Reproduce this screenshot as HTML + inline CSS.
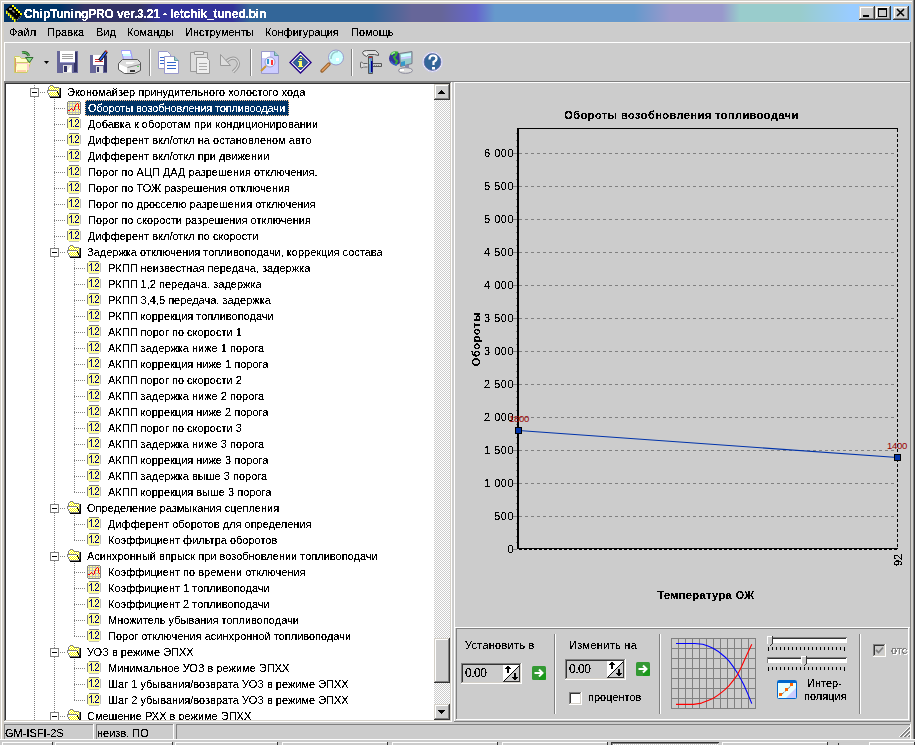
<!DOCTYPE html><html><head><meta charset="utf-8"><style>
html,body{margin:0;padding:0}
body{width:915px;height:745px;position:relative;overflow:hidden;background:#cccccc;font-family:"Liberation Sans",sans-serif;font-size:11px;color:#000}
div,span,svg{position:absolute}
.t{white-space:pre;filter:url(#crisp)}
</style></head><body>
<svg width="0" height="0" style="position:absolute;left:0;top:0"><filter id="crisp" x="-10%" y="-30%" width="120%" height="160%"><feComponentTransfer><feFuncA type="discrete" tableValues="0 0 1 1 1"/></feComponentTransfer></filter></svg>
<div style="left:0px;top:0px;width:915px;height:745px;background:#cccccc;"></div>
<div style="left:0px;top:0px;width:913px;height:1px;background:#d4d0c8;"></div>
<div style="left:0px;top:0px;width:1px;height:739px;background:#d4d0c8;"></div>
<div style="left:1px;top:1px;width:911px;height:1px;background:#ffffff;"></div>
<div style="left:1px;top:1px;width:1px;height:738px;background:#ffffff;"></div>
<div style="left:2px;top:2px;width:910px;height:2px;background:#d4d0c8;"></div>
<div style="left:2px;top:2px;width:2px;height:737px;background:#d4d0c8;"></div>
<div style="left:911px;top:2px;width:1px;height:737px;background:#d4d0c8;"></div>
<div style="left:913px;top:0px;width:1px;height:739px;background:#808080;"></div>
<div style="left:914px;top:0px;width:1px;height:739px;background:#333333;"></div>
<div style="left:4px;top:22px;width:907px;height:1px;background:#d4d0c8;"></div>
<div style="left:4px;top:4px;width:907px;height:18px;background:linear-gradient(to right,#003366 0px,#003366 56px,#333366 81px,#333366 136px,#333399 156px,#333399 229px,#336699 246px,#336699 368px,#666699 408px,#666699 437px,#6666cc 472px,#6699cc 491px,#6699cc 630px,#9999cc 666px,#9999cc 718px,#99cccc 736px,#99cccc 796px,#99ccff 846px,#99ccff 907px);"></div>
<svg style="left:4px;top:4px" width="20" height="18" viewBox="4 4 20 18">
<path d="M11 5L22.5 14.5L16.5 21L5.5 10Z" fill="#000"/>
<path d="M12 5h2v2h-2zM14 7h2v2h-2zM16 9h2v2h-2zM18 11h2v2h-2zM20 13h2v2h-2z" fill="#ffff00"/>
<path d="M6 11h1.5v3h-1.5zM8 13h1.5v3h-1.5zM10 15h1.5v3h-1.5zM12 17h1.5v3h-1.5zM14 19h1.5v3h-1.5z" fill="#ffff00"/>
<path d="M6 10L16 19.5" stroke="#999" stroke-width="0.8" stroke-dasharray="1 1"/>
<path d="M17 20L21.5 15.5" stroke="#999" stroke-width="1.5" stroke-dasharray="1 1"/>
<path d="M9 8h3v2h-3z" fill="#999"/><path d="M12.5 10.5L14.5 12.5" stroke="#999" stroke-width="1.2"/><path d="M16 14h1v1h-1z" fill="#999"/>
</svg>
<span class="t" style="left:24px;top:5px;line-height:18px;color:#fff;font-weight:bold;font-size:12px;letter-spacing:-0.15px">ChipTuningPRO ver.3.21 - letchik_tuned.bin</span>
<div style="left:859px;top:6px;width:16px;height:14px;background:#cccccc;"></div>
<div style="left:859px;top:6px;width:16px;height:1px;background:#d4d0c8;"></div>
<div style="left:859px;top:6px;width:1px;height:14px;background:#d4d0c8;"></div>
<div style="left:859px;top:19px;width:16px;height:1px;background:#333333;"></div>
<div style="left:874px;top:6px;width:1px;height:14px;background:#333333;"></div>
<div style="left:860px;top:7px;width:14px;height:1px;background:#ffffff;"></div>
<div style="left:860px;top:7px;width:1px;height:12px;background:#ffffff;"></div>
<div style="left:860px;top:18px;width:14px;height:1px;background:#808080;"></div>
<div style="left:873px;top:7px;width:1px;height:12px;background:#808080;"></div>
<div style="left:875px;top:6px;width:16px;height:14px;background:#cccccc;"></div>
<div style="left:875px;top:6px;width:16px;height:1px;background:#d4d0c8;"></div>
<div style="left:875px;top:6px;width:1px;height:14px;background:#d4d0c8;"></div>
<div style="left:875px;top:19px;width:16px;height:1px;background:#333333;"></div>
<div style="left:890px;top:6px;width:1px;height:14px;background:#333333;"></div>
<div style="left:876px;top:7px;width:14px;height:1px;background:#ffffff;"></div>
<div style="left:876px;top:7px;width:1px;height:12px;background:#ffffff;"></div>
<div style="left:876px;top:18px;width:14px;height:1px;background:#808080;"></div>
<div style="left:889px;top:7px;width:1px;height:12px;background:#808080;"></div>
<div style="left:893px;top:6px;width:16px;height:14px;background:#cccccc;"></div>
<div style="left:893px;top:6px;width:16px;height:1px;background:#d4d0c8;"></div>
<div style="left:893px;top:6px;width:1px;height:14px;background:#d4d0c8;"></div>
<div style="left:893px;top:19px;width:16px;height:1px;background:#333333;"></div>
<div style="left:908px;top:6px;width:1px;height:14px;background:#333333;"></div>
<div style="left:894px;top:7px;width:14px;height:1px;background:#ffffff;"></div>
<div style="left:894px;top:7px;width:1px;height:12px;background:#ffffff;"></div>
<div style="left:894px;top:18px;width:14px;height:1px;background:#808080;"></div>
<div style="left:907px;top:7px;width:1px;height:12px;background:#808080;"></div>
<div style="left:863px;top:15px;width:6px;height:2px;background:#000;"></div>
<div style="left:878px;top:8px;width:9px;height:9px;background:#000;"></div>
<div style="left:879px;top:10px;width:7px;height:6px;background:#cccccc;"></div>
<svg style="left:896px;top:8px" width="10" height="10" viewBox="0 0 10 10"><path d="M1 1L8 8M8 1L1 8" stroke="#000" stroke-width="1.6"/></svg>
<span class="t" style="left:9px;top:24px;line-height:16px;">Файл</span>
<span class="t" style="left:47px;top:24px;line-height:16px;">Правка</span>
<span class="t" style="left:96px;top:24px;line-height:16px;">Вид</span>
<span class="t" style="left:127px;top:24px;line-height:16px;">Команды</span>
<span class="t" style="left:185px;top:24px;line-height:16px;">Инструменты</span>
<span class="t" style="left:265px;top:24px;line-height:16px;">Конфигурация</span>
<span class="t" style="left:351px;top:24px;line-height:16px;">Помощь</span>
<div style="left:4px;top:42px;width:907px;height:1px;background:#ffffff;"></div>
<div style="left:4px;top:42px;width:1px;height:39px;background:#ffffff;"></div>
<div style="left:910px;top:42px;width:1px;height:40px;background:#808080;"></div>
<div style="left:4px;top:81px;width:907px;height:1px;background:#808080;"></div>
<div style="left:149px;top:49px;width:1px;height:27px;background:#808080;"></div>
<div style="left:150px;top:49px;width:1px;height:27px;background:#ffffff;"></div>
<div style="left:250px;top:49px;width:1px;height:27px;background:#808080;"></div>
<div style="left:251px;top:49px;width:1px;height:27px;background:#ffffff;"></div>
<div style="left:351px;top:49px;width:1px;height:27px;background:#808080;"></div>
<div style="left:352px;top:49px;width:1px;height:27px;background:#ffffff;"></div>
<svg style="left:0;top:42px" width="460" height="40" viewBox="0 42 460 40">
<!-- open -->
<path d="M14.5 72.5V56.5H19.5L21.5 58.5H27.5V62.5" fill="#ffffcc" stroke="#cccc66"/>
<path d="M16.5 62.5H30.5L27 72.5H14.5Z" fill="#ffffcc" stroke="#cccc66"/>
<path d="M15 58h1v14h-1z" fill="#dd9966"/>
<path d="M16 63h12v1h-12z" fill="#ffcccc"/>
<path d="M17 70h9v2h-9z" fill="#ffccaa"/>
<path d="M27 64h2v6h-2z" fill="#ffcccc"/>
<path d="M22 52.5Q27 51.5 29 56" stroke="#336633" stroke-width="2.6" fill="none"/>
<path d="M22 52.5Q27 51.5 29 56" stroke="#66cc66" stroke-width="1" fill="none"/>
<path d="M25.5 57.5H33L29.5 62.5Z" fill="#88dd88" stroke="#336633" stroke-linejoin="round"/>
<path d="M44 61h5l-2.5 3z" fill="#000"/>
<!-- save -->
<path d="M57 51h21v22h-21z" fill="#666699"/>
<path d="M74 52h3v20h-3z" fill="#333366"/>
<path d="M60 51h15v12h-15z" fill="#ffffff"/>
<path d="M62 54h11v1h-11zM62 56h11v1h-11zM62 58h11v1h-11z" fill="#a0a0a0"/>
<path d="M60 62h15v1h-15z" fill="#9999cc"/>
<path d="M63 65h9v8h-9z" fill="#e0e0e0"/>
<path d="M64 66h3v6h-3z" fill="#333366"/>
<path d="M67 71L71 66V72H67Z" fill="#ffffff"/>
<!-- save as -->
<path d="M90 55h17v18h-17z" fill="#666699"/>
<path d="M104 56h3v16h-3z" fill="#333366"/>
<path d="M93 55h11v10h-11z" fill="#ffffff"/>
<path d="M95 59h8v1h-8zM95 61h8v1h-8z" fill="#cc3333"/>
<path d="M96 66h7v7h-7z" fill="#e0e0e0"/><path d="M97 67h2v5h-2z" fill="#333366"/>
<path d="M99.5 60.5L106.5 51.5" stroke="#000" stroke-width="3.2"/>
<path d="M100 60L106 52" stroke="#3366ff" stroke-width="1.5"/>
<path d="M105.5 50.5l1.5 1.5" stroke="#cc3333" stroke-width="1.5"/>
<!-- print -->
<path d="M121.5 50.5H130.5L132.5 59.5H123.5Z" fill="#ccccff" stroke="#9999ff"/>
<path d="M122 51h8v3h-8z" fill="#ffffff"/><path d="M123 54h8v2h-8z" fill="#ccffff"/>
<path d="M118.5 63.5L122.5 59.5H137.5L140.5 62.5V70.5L134.5 73.5H124.5L118.5 69.5Z" fill="#dddddd" stroke="#555555"/>
<path d="M119 64L127 67.5V73H124.5L119 69Z" fill="#ffffff"/>
<path d="M126 62h9l-3 2h-6z" fill="#ffffff"/>
<path d="M127.5 67.5L140 64.5" stroke="#888888"/>
<path d="M130 70h5v2h-5z" fill="#333333"/>
<path d="M137 66h2v1h-2z" fill="#66cc66"/>
<!-- copy -->
<path d="M158.5 51.5H167.5L170.5 54.5V68.5H158.5Z" fill="#ffffff" stroke="#9999cc"/>
<path d="M160 57h6v1h-6zM160 60h6v1h-6zM160 63h6v1h-6z" fill="#3366cc"/>
<path d="M164.5 56.5H174.5L178.5 60.5V73.5H164.5Z" fill="#ffffff" stroke="#9999cc"/>
<path d="M174.5 56.5V60.5H178.5" fill="#99cccc" stroke="#669999"/>
<path d="M167 62h9v1h-9zM167 65h9v1h-9zM167 68h9v1h-9z" fill="#3366cc"/>
<!-- paste (disabled) -->
<path d="M190.5 52.5H207.5V71.5H190.5Z" fill="#dddddd" stroke="#999999" rx="2"/>
<path d="M194.5 51.5H203.5V54.5H194.5Z" fill="#e8e8e8" stroke="#999999"/>
<path d="M196.5 57.5H206.5L209.5 60.5V73.5H196.5Z" fill="#eeeeee" stroke="#999999"/>
<path d="M199 63h8v1h-8zM199 66h8v1h-8zM199 69h8v1h-8z" fill="#aaaaaa"/>
<!-- undo (disabled) -->
<path d="M224 64Q231 56 236 59Q241 63 236 69L233 72" stroke="#999999" stroke-width="3.2" fill="none"/>
<path d="M224 64Q231 56 236 59Q241 63 236 69L233 72" stroke="#dddddd" stroke-width="1.2" fill="none"/>
<path d="M220.5 54.5V65.5H230.5Z" fill="#dddddd" stroke="#999999"/>
<!-- doc magnifier -->
<path d="M261.5 51.5H274.5L278.5 55.5V73.5H261.5Z" fill="#ccccff" stroke="#9999cc"/>
<path d="M262 52h8v6h-8z" fill="#ffffff"/>
<path d="M274.5 51.5V55.5H278.5" fill="#99cccc" stroke="#669999"/>
<circle cx="270" cy="62" r="5" fill="#eeeeff" stroke="#9999cc"/>
<path d="M267 59h2v5h-2z" fill="#3399cc"/><path d="M271 60h2v5h-2z" fill="#ff3333"/>
<path d="M266 66L261 71" stroke="#cc9933" stroke-width="2"/>
<!-- info -->
<path d="M300.5 52L311 62.5L300.5 73L290 62.5Z" fill="#ffffff" stroke="#220088" stroke-width="1.4"/>
<path d="M300.5 55L308 62.5L300.5 70L293 62.5Z" fill="#336699" stroke="#000066" stroke-width="0.8"/>
<path d="M299 59h3v1h-3z M299 61h3v6h-3z M298 61h1v1h-1z M298 66h5v1h-5z" fill="#ffff66"/>
<path d="M300 57h2v1h-2z" fill="#ffff66"/>
<!-- magnifier -->
<path d="M329 64L322 71" stroke="#996633" stroke-width="3.5" stroke-linecap="round"/>
<path d="M329 64L322 71" stroke="#e8a060" stroke-width="1.5"/>
<circle cx="336" cy="57.5" r="7.5" fill="#ccffff" stroke="#9999cc"/>
<path d="M331 59Q331 52 338 51.5" stroke="#99cccc" stroke-width="1.5" fill="none"/>
<path d="M336 58h3v3h-3z" fill="#ffffff"/>
<!-- tools -->
<path d="M366.5 50.5H375.5L378.5 53.5V55.5L374.5 54.5H368.5L366.5 56.5Q362.5 55 362.5 52.5Q363.5 50.5 366.5 50.5Z" fill="#dddddd" stroke="#555555"/>
<path d="M364.5 52.5Q365.5 55 367 54" stroke="#ffffff" fill="none"/>
<path d="M367.5 63.5H363.5Q360.5 61 360.5 63V67Q360.5 69 363.5 67H367.5" fill="#dddddd" stroke="#666666"/>
<path d="M363 64.5h2v2h-2z" fill="#cccccc"/>
<path d="M372.5 63.5H381.5V66.5H372.5Z" fill="#cccccc" stroke="#555555"/>
<path d="M374 65h1v1h-1zM376 65h1v1h-1zM378 65h1v1h-1z" fill="#888"/>
<path d="M368.5 56.5H372.5V73.5H368.5Z" fill="#6699cc" stroke="#555555"/>
<path d="M369 57h3v1h-3z" fill="#cc3333"/>
<path d="M371 61h1.5v11h-1.5z" fill="#000099"/>
<path d="M369 59h1v5h-1z" fill="#99cccc"/>
<!-- network -->
<circle cx="395.5" cy="58.5" r="6.5" fill="#333399"/>
<path d="M391 55Q393 51.5 397 52.5Q396 56 394 57Q395 60 397 61Q396 64 395 65" stroke="#33aa33" stroke-width="2.2" fill="none"/>
<path d="M391.5 54.5Q393 52.5 395 52.5" stroke="#99ee99" stroke-width="1.5" fill="none"/>
<path d="M391 61Q393 65 397 65" stroke="#3366cc" stroke-width="1.5" fill="none"/>
<path d="M399.5 53.5L412 51.5V63.5L400.5 66.5Z" fill="#99cccc" stroke="#777788"/>
<path d="M401 54.5L411 53V56L401 57.5Z" fill="#ccffff"/>
<path d="M401 57.5L411 56V58L401 59.5Z" fill="#ccccff"/>
<path d="M401 62L405 61V65.5L401 66Z" fill="#3399cc"/>
<path d="M405 65h4v3h-4z" fill="#8888aa"/>
<ellipse cx="405.5" cy="70.5" rx="7" ry="2.8" fill="#dddddd" stroke="#888899"/>
<path d="M400 69h4v2h-4z" fill="#ffffff"/>
<!-- help -->
<circle cx="432.5" cy="62" r="10" fill="#ffffff" stroke="#ccccee"/>
<circle cx="432.5" cy="62" r="8.5" fill="#336699" stroke="#6666aa" stroke-width="0.8"/>
<path d="M429.5 59.5Q429.5 55.5 433 55.5Q436.5 55.5 436.5 58.5Q436.5 60.5 433.5 62V65" stroke="#ffffff" stroke-width="2.2" fill="none"/>
<path d="M432 67h3v2.5h-3z" fill="#ffffff"/>
</svg>
<div style="left:4px;top:82px;width:448px;height:640px;background:#ffffff;"></div>
<div style="left:4px;top:82px;width:448px;height:1px;background:#808080;"></div>
<div style="left:4px;top:82px;width:1px;height:640px;background:#808080;"></div>
<div style="left:5px;top:83px;width:446px;height:1px;background:#333333;"></div>
<div style="left:5px;top:83px;width:1px;height:638px;background:#333333;"></div>
<div style="left:4px;top:721px;width:448px;height:1px;background:#ffffff;"></div>
<div style="left:451px;top:82px;width:1px;height:640px;background:#ffffff;"></div>
<div style="left:5px;top:720px;width:446px;height:1px;background:#d4d0c8;"></div>
<div style="left:450px;top:83px;width:1px;height:638px;background:#d4d0c8;"></div>
<div style="left:6px;top:84px;width:428px;height:636px;overflow:hidden;background:#fff">
<svg style="left:0;top:0" width="428" height="636" viewBox="6 84 428 636">
<defs>
<pattern id="dotv" x="0" y="1" width="1" height="2" patternUnits="userSpaceOnUse"><rect width="1" height="1" fill="#808080"/></pattern>
<pattern id="doth" x="0" y="0" width="2" height="1" patternUnits="userSpaceOnUse"><rect width="1" height="1" fill="#808080"/></pattern>
<pattern id="chk" x="0" y="0" width="2" height="2" patternUnits="userSpaceOnUse"><rect width="2" height="2" fill="#ffffff"/><rect width="1" height="1" fill="#ffff00"/><rect x="1" y="1" width="1" height="1" fill="#ffff00"/></pattern>
<symbol id="num" width="14" height="13"><path fill="#808080" d="M2 0h10v1h-10zM0 2h1v1h-1zM0 3h1v1h-1zM0 4h1v1h-1zM0 5h1v1h-1zM0 6h1v1h-1zM0 7h1v1h-1zM0 8h1v1h-1zM0 9h1v1h-1zM0 10h1v1h-1z"/><path fill="#ffff99" d="M1 1h12v1h-12zM1 2h3v1h-3zM5 2h4v1h-4zM11 2h2v1h-2zM1 3h2v1h-2zM5 3h3v1h-3zM9 3h2v1h-2zM12 3h1v1h-1zM1 4h1v1h-1zM3 4h1v1h-1zM5 4h3v1h-3zM9 4h2v1h-2zM12 4h1v1h-1zM1 5h3v1h-3zM5 5h6v1h-6zM12 5h1v1h-1zM1 6h3v1h-3zM5 6h5v1h-5zM11 6h2v1h-2zM1 7h3v1h-3zM5 7h4v1h-4zM10 7h3v1h-3zM1 8h3v1h-3zM5 8h3v1h-3zM9 8h4v1h-4zM1 9h3v1h-3zM5 9h1v1h-1zM7 9h1v1h-1zM12 9h1v1h-1zM1 10h12v1h-12zM1 11h12v1h-12z"/><path fill="#000080" d="M4 2h1v1h-1zM9 2h2v1h-2zM3 3h2v1h-2zM8 3h1v1h-1zM11 3h1v1h-1zM2 4h1v1h-1zM4 4h1v1h-1zM8 4h1v1h-1zM11 4h1v1h-1zM4 5h1v1h-1zM11 5h1v1h-1zM4 6h1v1h-1zM10 6h1v1h-1zM4 7h1v1h-1zM9 7h1v1h-1zM4 8h1v1h-1zM8 8h1v1h-1zM4 9h1v1h-1zM6 9h1v1h-1zM8 9h4v1h-4z"/><path fill="#c0c0c0" d="M13 2h1v1h-1zM13 3h1v1h-1zM13 4h1v1h-1zM13 5h1v1h-1zM13 6h1v1h-1zM13 7h1v1h-1zM13 8h1v1h-1zM13 9h1v1h-1zM13 10h1v1h-1zM2 12h10v1h-10z"/></symbol><symbol id="chart" width="14" height="14"><path fill="#808080" d="M1 0h12v1h-12zM0 1h1v1h-1zM13 1h1v1h-1zM0 2h1v1h-1zM13 2h1v1h-1zM0 3h1v1h-1zM13 3h1v1h-1zM0 4h1v1h-1zM13 4h1v1h-1zM0 5h1v1h-1zM13 5h1v1h-1zM0 6h1v1h-1zM13 6h1v1h-1zM0 7h1v1h-1zM13 7h1v1h-1zM0 8h1v1h-1zM13 8h1v1h-1zM0 9h1v1h-1zM13 9h1v1h-1zM0 10h1v1h-1zM13 10h1v1h-1zM0 11h1v1h-1zM13 11h1v1h-1zM0 12h1v1h-1zM13 12h1v1h-1zM1 13h12v1h-12z"/><path fill="#ffff99" d="M1 1h1v1h-1zM3 1h2v1h-2zM6 1h2v1h-2zM9 1h2v1h-2zM12 1h1v1h-1zM1 3h1v1h-1zM3 3h2v1h-2zM6 3h2v1h-2zM10 3h1v1h-1zM12 3h1v1h-1zM1 4h1v1h-1zM3 4h2v1h-2zM6 4h2v1h-2zM9 4h2v1h-2zM12 4h1v1h-1zM1 6h1v1h-1zM3 6h2v1h-2zM6 6h1v1h-1zM9 6h2v1h-2zM12 6h1v1h-1zM1 7h1v1h-1zM3 7h1v1h-1zM6 7h1v1h-1zM9 7h2v1h-2zM12 7h1v1h-1zM3 9h2v1h-2zM7 9h1v1h-1zM9 9h2v1h-2zM12 9h1v1h-1zM1 10h1v1h-1zM3 10h2v1h-2zM6 10h2v1h-2zM9 10h2v1h-2zM12 10h1v1h-1zM1 12h1v1h-1zM3 12h2v1h-2zM6 12h2v1h-2zM9 12h2v1h-2zM12 12h1v1h-1z"/><path fill="#c0c0c0" d="M2 1h1v1h-1zM5 1h1v1h-1zM8 1h1v1h-1zM11 1h1v1h-1zM1 2h9v1h-9zM11 2h2v1h-2zM2 3h1v1h-1zM5 3h1v1h-1zM8 3h1v1h-1zM2 4h1v1h-1zM5 4h1v1h-1zM1 5h7v1h-7zM9 5h2v1h-2zM12 5h1v1h-1zM2 6h1v1h-1zM5 6h1v1h-1zM8 6h1v1h-1zM2 7h1v1h-1zM5 7h1v1h-1zM8 7h1v1h-1zM1 8h2v1h-2zM4 8h1v1h-1zM6 8h1v1h-1zM8 8h4v1h-4zM5 9h1v1h-1zM8 9h1v1h-1zM11 9h1v1h-1zM2 10h1v1h-1zM5 10h1v1h-1zM8 10h1v1h-1zM11 10h1v1h-1zM1 11h12v1h-12zM2 12h1v1h-1zM5 12h1v1h-1zM8 12h1v1h-1zM11 12h1v1h-1z"/><path fill="#ff0000" d="M10 2h1v1h-1zM9 3h1v1h-1zM11 3h1v1h-1zM8 4h1v1h-1zM11 4h1v1h-1zM8 5h1v1h-1zM11 5h1v1h-1zM7 6h1v1h-1zM11 6h1v1h-1zM4 7h1v1h-1zM7 7h1v1h-1zM11 7h1v1h-1zM3 8h1v1h-1zM5 8h1v1h-1zM7 8h1v1h-1zM12 8h1v1h-1zM1 9h2v1h-2zM6 9h1v1h-1z"/></symbol><symbol id="fold" width="14" height="13"><path fill="#808080" d="M3 0h3v1h-3zM2 1h1v1h-1zM6 1h1v1h-1zM1 2h1v1h-1zM7 2h5v1h-5zM1 3h1v1h-1zM12 3h1v1h-1zM1 4h1v1h-1zM12 4h1v1h-1zM0 5h10v1h-10zM12 5h1v1h-1zM0 6h1v1h-1zM12 6h1v1h-1zM0 7h1v1h-1zM12 7h1v1h-1zM1 8h1v1h-1zM12 8h1v1h-1zM1 9h1v1h-1zM12 9h1v1h-1zM2 10h1v1h-1zM2 11h10v1h-10z"/><path fill="#ffff00" d="M3 1h1v1h-1zM5 1h1v1h-1zM4 2h1v1h-1zM6 2h1v1h-1zM3 3h1v1h-1zM5 3h1v1h-1zM7 3h1v1h-1zM9 3h1v1h-1zM11 3h1v1h-1zM2 4h1v1h-1zM4 4h1v1h-1zM6 4h1v1h-1zM8 4h1v1h-1zM10 4h1v1h-1zM11 5h1v1h-1zM3 7h1v1h-1zM5 7h1v1h-1zM7 7h1v1h-1zM9 7h1v1h-1zM11 7h1v1h-1zM2 8h1v1h-1zM4 8h1v1h-1zM6 8h1v1h-1zM8 8h1v1h-1zM10 8h1v1h-1zM3 9h1v1h-1zM5 9h1v1h-1zM7 9h1v1h-1zM9 9h1v1h-1zM4 10h1v1h-1zM6 10h1v1h-1zM8 10h1v1h-1zM10 10h1v1h-1z"/><path fill="#ffffff" d="M4 1h1v1h-1zM2 2h2v1h-2zM5 2h1v1h-1zM2 3h1v1h-1zM4 3h1v1h-1zM6 3h1v1h-1zM8 3h1v1h-1zM10 3h1v1h-1zM3 4h1v1h-1zM5 4h1v1h-1zM7 4h1v1h-1zM9 4h1v1h-1zM11 4h1v1h-1zM10 5h1v1h-1zM1 6h9v1h-9zM11 6h1v1h-1zM1 7h2v1h-2zM4 7h1v1h-1zM6 7h1v1h-1zM8 7h1v1h-1zM3 8h1v1h-1zM5 8h1v1h-1zM7 8h1v1h-1zM9 8h1v1h-1zM2 9h1v1h-1zM4 9h1v1h-1zM6 9h1v1h-1zM8 9h1v1h-1zM10 9h1v1h-1zM3 10h1v1h-1zM5 10h1v1h-1zM7 10h1v1h-1zM9 10h1v1h-1zM11 10h1v1h-1z"/><path fill="#000000" d="M13 3h1v1h-1zM13 4h1v1h-1zM13 5h1v1h-1zM10 6h1v1h-1zM13 6h1v1h-1zM10 7h1v1h-1zM13 7h1v1h-1zM11 8h1v1h-1zM13 8h1v1h-1zM11 9h1v1h-1zM13 9h1v1h-1zM12 10h2v1h-2zM12 11h2v1h-2zM3 12h11v1h-11z"/></symbol></defs>
<rect x="34" y="84" width="1" height="636" fill="url(#dotv)"/>
<rect x="54" y="97" width="1" height="623" fill="url(#dotv)"/>
<rect x="74" y="257" width="1" height="236" fill="url(#dotv)"/>
<rect x="74" y="513" width="1" height="28" fill="url(#dotv)"/>
<rect x="74" y="561" width="1" height="76" fill="url(#dotv)"/>
<rect x="74" y="657" width="1" height="44" fill="url(#dotv)"/>
<rect x="40" y="92" width="5" height="1" fill="url(#doth)"/>
<rect x="30.5" y="88.5" width="8" height="8" fill="#fff" stroke="#808080"/>
<rect x="32" y="92" width="5" height="1" fill="#000"/>
<use href="#fold" x="47" y="85"/>
<rect x="54" y="108" width="11" height="1" fill="url(#doth)"/>
<use href="#chart" x="67" y="101"/>
<rect x="54" y="124" width="11" height="1" fill="url(#doth)"/>
<use href="#num" x="67" y="117"/>
<rect x="54" y="140" width="11" height="1" fill="url(#doth)"/>
<use href="#num" x="67" y="133"/>
<rect x="54" y="156" width="11" height="1" fill="url(#doth)"/>
<use href="#num" x="67" y="149"/>
<rect x="54" y="172" width="11" height="1" fill="url(#doth)"/>
<use href="#num" x="67" y="165"/>
<rect x="54" y="188" width="11" height="1" fill="url(#doth)"/>
<use href="#num" x="67" y="181"/>
<rect x="54" y="204" width="11" height="1" fill="url(#doth)"/>
<use href="#num" x="67" y="197"/>
<rect x="54" y="220" width="11" height="1" fill="url(#doth)"/>
<use href="#num" x="67" y="213"/>
<rect x="54" y="236" width="11" height="1" fill="url(#doth)"/>
<use href="#num" x="67" y="229"/>
<rect x="60" y="252" width="5" height="1" fill="url(#doth)"/>
<rect x="50.5" y="248.5" width="8" height="8" fill="#fff" stroke="#808080"/>
<rect x="52" y="252" width="5" height="1" fill="#000"/>
<use href="#fold" x="67" y="245"/>
<rect x="74" y="268" width="11" height="1" fill="url(#doth)"/>
<use href="#num" x="87" y="261"/>
<rect x="74" y="284" width="11" height="1" fill="url(#doth)"/>
<use href="#num" x="87" y="277"/>
<rect x="74" y="300" width="11" height="1" fill="url(#doth)"/>
<use href="#num" x="87" y="293"/>
<rect x="74" y="316" width="11" height="1" fill="url(#doth)"/>
<use href="#num" x="87" y="309"/>
<rect x="74" y="332" width="11" height="1" fill="url(#doth)"/>
<use href="#num" x="87" y="325"/>
<rect x="74" y="348" width="11" height="1" fill="url(#doth)"/>
<use href="#num" x="87" y="341"/>
<rect x="74" y="364" width="11" height="1" fill="url(#doth)"/>
<use href="#num" x="87" y="357"/>
<rect x="74" y="380" width="11" height="1" fill="url(#doth)"/>
<use href="#num" x="87" y="373"/>
<rect x="74" y="396" width="11" height="1" fill="url(#doth)"/>
<use href="#num" x="87" y="389"/>
<rect x="74" y="412" width="11" height="1" fill="url(#doth)"/>
<use href="#num" x="87" y="405"/>
<rect x="74" y="428" width="11" height="1" fill="url(#doth)"/>
<use href="#num" x="87" y="421"/>
<rect x="74" y="444" width="11" height="1" fill="url(#doth)"/>
<use href="#num" x="87" y="437"/>
<rect x="74" y="460" width="11" height="1" fill="url(#doth)"/>
<use href="#num" x="87" y="453"/>
<rect x="74" y="476" width="11" height="1" fill="url(#doth)"/>
<use href="#num" x="87" y="469"/>
<rect x="74" y="492" width="11" height="1" fill="url(#doth)"/>
<use href="#num" x="87" y="485"/>
<rect x="60" y="508" width="5" height="1" fill="url(#doth)"/>
<rect x="50.5" y="504.5" width="8" height="8" fill="#fff" stroke="#808080"/>
<rect x="52" y="508" width="5" height="1" fill="#000"/>
<use href="#fold" x="67" y="501"/>
<rect x="74" y="524" width="11" height="1" fill="url(#doth)"/>
<use href="#num" x="87" y="517"/>
<rect x="74" y="540" width="11" height="1" fill="url(#doth)"/>
<use href="#num" x="87" y="533"/>
<rect x="60" y="556" width="5" height="1" fill="url(#doth)"/>
<rect x="50.5" y="552.5" width="8" height="8" fill="#fff" stroke="#808080"/>
<rect x="52" y="556" width="5" height="1" fill="#000"/>
<use href="#fold" x="67" y="549"/>
<rect x="74" y="572" width="11" height="1" fill="url(#doth)"/>
<use href="#chart" x="87" y="565"/>
<rect x="74" y="588" width="11" height="1" fill="url(#doth)"/>
<use href="#num" x="87" y="581"/>
<rect x="74" y="604" width="11" height="1" fill="url(#doth)"/>
<use href="#num" x="87" y="597"/>
<rect x="74" y="620" width="11" height="1" fill="url(#doth)"/>
<use href="#num" x="87" y="613"/>
<rect x="74" y="636" width="11" height="1" fill="url(#doth)"/>
<use href="#num" x="87" y="629"/>
<rect x="60" y="652" width="5" height="1" fill="url(#doth)"/>
<rect x="50.5" y="648.5" width="8" height="8" fill="#fff" stroke="#808080"/>
<rect x="52" y="652" width="5" height="1" fill="#000"/>
<use href="#fold" x="67" y="645"/>
<rect x="74" y="668" width="11" height="1" fill="url(#doth)"/>
<use href="#num" x="87" y="661"/>
<rect x="74" y="684" width="11" height="1" fill="url(#doth)"/>
<use href="#num" x="87" y="677"/>
<rect x="74" y="700" width="11" height="1" fill="url(#doth)"/>
<use href="#num" x="87" y="693"/>
<rect x="60" y="716" width="5" height="1" fill="url(#doth)"/>
<rect x="50.5" y="712.5" width="8" height="8" fill="#fff" stroke="#808080"/>
<rect x="52" y="716" width="5" height="1" fill="#000"/>
<use href="#fold" x="67" y="709"/>
</svg>
<span class="t" style="left:61px;top:0px;line-height:16px">Экономайзер принудительного холостого хода</span>
<div style="left:79px;top:16px;width:204px;height:16px;background:#003366"></div>
<div style="left:79px;top:16px;width:202px;height:14px;border:1px dotted #ffcc99"></div>
<span class="t" style="left:82px;top:16px;line-height:16px;color:#fff;letter-spacing:-0.12px">Обороты возобновления топливоодачи</span>
<span class="t" style="left:82px;top:32px;line-height:16px">Добавка к оборотам при кондиционировании</span>
<span class="t" style="left:82px;top:48px;line-height:16px">Дифферент вкл/откл на остановленом авто</span>
<span class="t" style="left:82px;top:64px;line-height:16px">Дифферент вкл/откл при движении</span>
<span class="t" style="left:82px;top:80px;line-height:16px">Порог по АЦП ДАД разрешения отключения.</span>
<span class="t" style="left:82px;top:96px;line-height:16px">Порог по ТОЖ разрешения отключения</span>
<span class="t" style="left:82px;top:112px;line-height:16px">Порог по дросселю разрешения отключения</span>
<span class="t" style="left:82px;top:128px;line-height:16px">Порог по скорости разрешения отключения</span>
<span class="t" style="left:82px;top:144px;line-height:16px">Дифферент вкл/откл по скорости</span>
<span class="t" style="left:81px;top:160px;line-height:16px">Задержка отключения топливоподачи, коррекция состава</span>
<span class="t" style="left:102px;top:176px;line-height:16px">РКПП неизвестная передача, задержка</span>
<span class="t" style="left:102px;top:192px;line-height:16px">РКПП 1,2 передача, задержка</span>
<span class="t" style="left:102px;top:208px;line-height:16px">РКПП 3,4,5 передача, задержка</span>
<span class="t" style="left:102px;top:224px;line-height:16px">РКПП коррекция топливоподачи</span>
<span class="t" style="left:102px;top:240px;line-height:16px">АКПП порог по скорости 1</span>
<span class="t" style="left:102px;top:256px;line-height:16px">АКПП задержка ниже 1 порога</span>
<span class="t" style="left:102px;top:272px;line-height:16px">АКПП коррекция ниже 1 порога</span>
<span class="t" style="left:102px;top:288px;line-height:16px">АКПП порог по скорости 2</span>
<span class="t" style="left:102px;top:304px;line-height:16px">АКПП задержка ниже 2 порога</span>
<span class="t" style="left:102px;top:320px;line-height:16px">АКПП коррекция ниже 2 порога</span>
<span class="t" style="left:102px;top:336px;line-height:16px">АКПП порог по скорости 3</span>
<span class="t" style="left:102px;top:352px;line-height:16px">АКПП задержка ниже 3 порога</span>
<span class="t" style="left:102px;top:368px;line-height:16px">АКПП коррекция ниже 3 порога</span>
<span class="t" style="left:102px;top:384px;line-height:16px">АКПП задержка выше 3 порога</span>
<span class="t" style="left:102px;top:400px;line-height:16px">АКПП коррекция выше 3 порога</span>
<span class="t" style="left:81px;top:416px;line-height:16px">Определение размыкания сцепления</span>
<span class="t" style="left:102px;top:432px;line-height:16px">Дифферент оборотов для определения</span>
<span class="t" style="left:102px;top:448px;line-height:16px">Коэффициент фильтра оборотов</span>
<span class="t" style="left:81px;top:464px;line-height:16px">Асинхронный впрыск при возобновлении топливоподачи</span>
<span class="t" style="left:102px;top:480px;line-height:16px">Коэффициент по времени отключения</span>
<span class="t" style="left:102px;top:496px;line-height:16px">Коэффициент 1 топливоподачи</span>
<span class="t" style="left:102px;top:512px;line-height:16px">Коэффициент 2 топливоподачи</span>
<span class="t" style="left:102px;top:528px;line-height:16px">Множитель убывания топливоподачи</span>
<span class="t" style="left:102px;top:544px;line-height:16px">Порог отключения асинхронной топливоподачи</span>
<span class="t" style="left:81px;top:560px;line-height:16px">УОЗ в режиме ЭПХХ</span>
<span class="t" style="left:102px;top:576px;line-height:16px">Минимальное УОЗ в режиме ЭПХХ</span>
<span class="t" style="left:102px;top:592px;line-height:16px">Шаг 1 убывания/возврата УОЗ в режиме ЭПХХ</span>
<span class="t" style="left:102px;top:608px;line-height:16px">Шаг 2 убывания/возврата УОЗ в режиме ЭПХХ</span>
<span class="t" style="left:81px;top:624px;line-height:16px">Смешение РХХ в режиме ЭПХХ</span>
</div>
<div style="left:434px;top:84px;width:16px;height:636px;background:repeating-conic-gradient(#ffffff 0 25%,#cccccc 0 50%) 0 0/2px 2px;"></div>
<div style="left:434px;top:84px;width:16px;height:16px;background:#cccccc;"></div>
<div style="left:434px;top:84px;width:16px;height:1px;background:#d4d0c8;"></div>
<div style="left:434px;top:84px;width:1px;height:16px;background:#d4d0c8;"></div>
<div style="left:434px;top:99px;width:16px;height:1px;background:#333333;"></div>
<div style="left:449px;top:84px;width:1px;height:16px;background:#333333;"></div>
<div style="left:435px;top:85px;width:14px;height:1px;background:#ffffff;"></div>
<div style="left:435px;top:85px;width:1px;height:14px;background:#ffffff;"></div>
<div style="left:435px;top:98px;width:14px;height:1px;background:#808080;"></div>
<div style="left:448px;top:85px;width:1px;height:14px;background:#808080;"></div>
<svg style="left:434px;top:84px" width="16" height="16"><path d="M7 6h1v1h-1zM6 7h3v1h-3zM5 8h5v1h-5zM4 9h7v1h-7z" fill="#000"/></svg>
<div style="left:434px;top:704px;width:16px;height:16px;background:#cccccc;"></div>
<div style="left:434px;top:704px;width:16px;height:1px;background:#d4d0c8;"></div>
<div style="left:434px;top:704px;width:1px;height:16px;background:#d4d0c8;"></div>
<div style="left:434px;top:719px;width:16px;height:1px;background:#333333;"></div>
<div style="left:449px;top:704px;width:1px;height:16px;background:#333333;"></div>
<div style="left:435px;top:705px;width:14px;height:1px;background:#ffffff;"></div>
<div style="left:435px;top:705px;width:1px;height:14px;background:#ffffff;"></div>
<div style="left:435px;top:718px;width:14px;height:1px;background:#808080;"></div>
<div style="left:448px;top:705px;width:1px;height:14px;background:#808080;"></div>
<svg style="left:434px;top:704px" width="16" height="16"><path d="M4 6h7v1h-7zM5 7h5v1h-5zM6 8h3v1h-3zM7 9h1v1h-1z" fill="#000"/></svg>
<div style="left:434px;top:638px;width:16px;height:45px;background:#cccccc;"></div>
<div style="left:434px;top:638px;width:16px;height:1px;background:#d4d0c8;"></div>
<div style="left:434px;top:638px;width:1px;height:45px;background:#d4d0c8;"></div>
<div style="left:434px;top:682px;width:16px;height:1px;background:#333333;"></div>
<div style="left:449px;top:638px;width:1px;height:45px;background:#333333;"></div>
<div style="left:435px;top:639px;width:14px;height:1px;background:#ffffff;"></div>
<div style="left:435px;top:639px;width:1px;height:43px;background:#ffffff;"></div>
<div style="left:435px;top:681px;width:14px;height:1px;background:#808080;"></div>
<div style="left:448px;top:639px;width:1px;height:43px;background:#808080;"></div>
<div style="left:454px;top:82px;width:1px;height:640px;background:#ffffff;"></div>
<div style="left:454px;top:82px;width:456px;height:1px;background:#ffffff;"></div>
<div style="left:910px;top:82px;width:1px;height:640px;background:#808080;"></div>
<div style="left:454px;top:721px;width:457px;height:1px;background:#808080;"></div>
<svg style="left:455px;top:83px" width="455" height="544" viewBox="455 83 455 544" font-family="Liberation Sans" shape-rendering="crispEdges">
<path d="M519 516.5H897" stroke="#808080" stroke-dasharray="3 3"/>
<path d="M513 516.5H517" stroke="#808080"/>
<text filter="url(#crisp)" x="514" y="520" font-size="11" text-anchor="end" letter-spacing="0.5">500</text>
<path d="M519 483.5H897" stroke="#808080" stroke-dasharray="3 3"/>
<path d="M513 483.5H517" stroke="#808080"/>
<text filter="url(#crisp)" x="514" y="487" font-size="11" text-anchor="end" letter-spacing="0.5">1 000</text>
<path d="M519 450.5H897" stroke="#808080" stroke-dasharray="3 3"/>
<path d="M513 450.5H517" stroke="#808080"/>
<text filter="url(#crisp)" x="514" y="454" font-size="11" text-anchor="end" letter-spacing="0.5">1 500</text>
<path d="M519 417.5H897" stroke="#808080" stroke-dasharray="3 3"/>
<path d="M513 417.5H517" stroke="#808080"/>
<text filter="url(#crisp)" x="514" y="421" font-size="11" text-anchor="end" letter-spacing="0.5">2 000</text>
<path d="M519 384.5H897" stroke="#808080" stroke-dasharray="3 3"/>
<path d="M513 384.5H517" stroke="#808080"/>
<text filter="url(#crisp)" x="514" y="388" font-size="11" text-anchor="end" letter-spacing="0.5">2 500</text>
<path d="M519 351.5H897" stroke="#808080" stroke-dasharray="3 3"/>
<path d="M513 351.5H517" stroke="#808080"/>
<text filter="url(#crisp)" x="514" y="355" font-size="11" text-anchor="end" letter-spacing="0.5">3 000</text>
<path d="M519 318.5H897" stroke="#808080" stroke-dasharray="3 3"/>
<path d="M513 318.5H517" stroke="#808080"/>
<text filter="url(#crisp)" x="514" y="322" font-size="11" text-anchor="end" letter-spacing="0.5">3 500</text>
<path d="M519 285.5H897" stroke="#808080" stroke-dasharray="3 3"/>
<path d="M513 285.5H517" stroke="#808080"/>
<text filter="url(#crisp)" x="514" y="289" font-size="11" text-anchor="end" letter-spacing="0.5">4 000</text>
<path d="M519 252.5H897" stroke="#808080" stroke-dasharray="3 3"/>
<path d="M513 252.5H517" stroke="#808080"/>
<text filter="url(#crisp)" x="514" y="256" font-size="11" text-anchor="end" letter-spacing="0.5">4 500</text>
<path d="M519 219.5H897" stroke="#808080" stroke-dasharray="3 3"/>
<path d="M513 219.5H517" stroke="#808080"/>
<text filter="url(#crisp)" x="514" y="223" font-size="11" text-anchor="end" letter-spacing="0.5">5 000</text>
<path d="M519 186.5H897" stroke="#808080" stroke-dasharray="3 3"/>
<path d="M513 186.5H517" stroke="#808080"/>
<text filter="url(#crisp)" x="514" y="190" font-size="11" text-anchor="end" letter-spacing="0.5">5 500</text>
<path d="M519 153.5H897" stroke="#808080" stroke-dasharray="3 3"/>
<path d="M513 153.5H517" stroke="#808080"/>
<text filter="url(#crisp)" x="514" y="157" font-size="11" text-anchor="end" letter-spacing="0.5">6 000</text>
<path d="M513 549.5H517" stroke="#808080"/>
<text filter="url(#crisp)" x="514" y="553" font-size="11" text-anchor="end" letter-spacing="0.5">0</text>
<path d="M516 542.5H517" stroke="#808080"/>
<path d="M516 536.5H517" stroke="#808080"/>
<path d="M516 529.5H517" stroke="#808080"/>
<path d="M516 523.5H517" stroke="#808080"/>
<path d="M516 509.5H517" stroke="#808080"/>
<path d="M516 503.5H517" stroke="#808080"/>
<path d="M516 496.5H517" stroke="#808080"/>
<path d="M516 490.5H517" stroke="#808080"/>
<path d="M516 476.5H517" stroke="#808080"/>
<path d="M516 470.5H517" stroke="#808080"/>
<path d="M516 463.5H517" stroke="#808080"/>
<path d="M516 457.5H517" stroke="#808080"/>
<path d="M516 443.5H517" stroke="#808080"/>
<path d="M516 437.5H517" stroke="#808080"/>
<path d="M516 430.5H517" stroke="#808080"/>
<path d="M516 424.5H517" stroke="#808080"/>
<path d="M516 410.5H517" stroke="#808080"/>
<path d="M516 404.5H517" stroke="#808080"/>
<path d="M516 397.5H517" stroke="#808080"/>
<path d="M516 391.5H517" stroke="#808080"/>
<path d="M516 377.5H517" stroke="#808080"/>
<path d="M516 371.5H517" stroke="#808080"/>
<path d="M516 364.5H517" stroke="#808080"/>
<path d="M516 358.5H517" stroke="#808080"/>
<path d="M516 344.5H517" stroke="#808080"/>
<path d="M516 338.5H517" stroke="#808080"/>
<path d="M516 331.5H517" stroke="#808080"/>
<path d="M516 325.5H517" stroke="#808080"/>
<path d="M516 311.5H517" stroke="#808080"/>
<path d="M516 305.5H517" stroke="#808080"/>
<path d="M516 298.5H517" stroke="#808080"/>
<path d="M516 292.5H517" stroke="#808080"/>
<path d="M516 278.5H517" stroke="#808080"/>
<path d="M516 272.5H517" stroke="#808080"/>
<path d="M516 265.5H517" stroke="#808080"/>
<path d="M516 259.5H517" stroke="#808080"/>
<path d="M516 245.5H517" stroke="#808080"/>
<path d="M516 239.5H517" stroke="#808080"/>
<path d="M516 232.5H517" stroke="#808080"/>
<path d="M516 226.5H517" stroke="#808080"/>
<path d="M516 212.5H517" stroke="#808080"/>
<path d="M516 206.5H517" stroke="#808080"/>
<path d="M516 199.5H517" stroke="#808080"/>
<path d="M516 193.5H517" stroke="#808080"/>
<path d="M516 179.5H517" stroke="#808080"/>
<path d="M516 173.5H517" stroke="#808080"/>
<path d="M516 166.5H517" stroke="#808080"/>
<path d="M516 160.5H517" stroke="#808080"/>
<path d="M516 146.5H517" stroke="#808080"/>
<path d="M516 140.5H517" stroke="#808080"/>
<path d="M516 133.5H517" stroke="#808080"/>
<path d="M517 128.5H898" stroke="#000"/>
<path d="M517 128h2v421h-2z" fill="#000"/>
<path d="M517 548h381v1h-381z" fill="#000"/>
<path d="M519 549.5H898" stroke="#000" stroke-dasharray="3 2"/>
<path d="M897.5 129V549" stroke="#000" stroke-dasharray="3 2"/>
</svg>
<svg style="left:455px;top:83px" width="455" height="544" viewBox="455 83 455 544" font-family="Liberation Sans">
<path d="M518.5 430.5L897.5 457.5" stroke="#0033aa" stroke-width="1.2"/>
<rect x="515.5" y="427.5" width="6" height="6" fill="#0033aa" stroke="#000"/>
<rect x="894.5" y="454.5" width="6" height="6" fill="#0033aa" stroke="#000"/>
<text x="509" y="422" font-size="9.5" fill="#990000" letter-spacing="-0.3">1800</text>
<text x="887" y="449" font-size="9.5" fill="#990000" letter-spacing="-0.3">1400</text>
<text filter="url(#crisp)" x="681.5" y="119" font-size="11" font-weight="bold" text-anchor="middle" letter-spacing="0.45">Обороты возобновления топливоодачи</text>
<text filter="url(#crisp)" x="706" y="599" font-size="11" font-weight="bold" text-anchor="middle" letter-spacing="0.4">Температура ОЖ</text>
<text filter="url(#crisp)" transform="translate(480 339) rotate(-90)" font-size="11" font-weight="bold" text-anchor="middle" letter-spacing="0.65">Обороты</text>
<text filter="url(#crisp)" transform="translate(902 560) rotate(-90)" font-size="11" text-anchor="middle">92</text>
</svg>
<div style="left:455px;top:627px;width:455px;height:1px;background:#ffffff;"></div>
<div style="left:456px;top:628px;width:452px;height:1px;background:#808080;"></div>
<div style="left:456px;top:628px;width:1px;height:91px;background:#808080;"></div>
<div style="left:908px;top:628px;width:1px;height:92px;background:#ffffff;"></div>
<div style="left:456px;top:719px;width:453px;height:1px;background:#ffffff;"></div>
<div style="left:554px;top:634px;width:1px;height:80px;background:#808080;"></div>
<div style="left:555px;top:634px;width:1px;height:80px;background:#ffffff;"></div>
<div style="left:659px;top:634px;width:1px;height:80px;background:#808080;"></div>
<div style="left:660px;top:634px;width:1px;height:80px;background:#ffffff;"></div>
<div style="left:859px;top:634px;width:1px;height:80px;background:#808080;"></div>
<div style="left:860px;top:634px;width:1px;height:80px;background:#ffffff;"></div>
<span class="t" style="left:465px;top:637px;line-height:16px;letter-spacing:0.25px">Установить в</span>
<div style="left:461px;top:663px;width:61px;height:21px;background:#cccccc;"></div>
<div style="left:461px;top:663px;width:61px;height:1px;background:#808080;"></div>
<div style="left:461px;top:663px;width:1px;height:21px;background:#808080;"></div>
<div style="left:461px;top:683px;width:61px;height:1px;background:#ffffff;"></div>
<div style="left:521px;top:663px;width:1px;height:21px;background:#ffffff;"></div>
<div style="left:462px;top:664px;width:59px;height:1px;background:#333333;"></div>
<div style="left:462px;top:664px;width:1px;height:19px;background:#333333;"></div>
<div style="left:462px;top:682px;width:59px;height:1px;background:#d4d0c8;"></div>
<div style="left:520px;top:664px;width:1px;height:19px;background:#d4d0c8;"></div>
<span class="t" style="left:465px;top:664px;line-height:18px;font-size:12px;letter-spacing:-0.5px">0.00</span>
<svg style="left:503px;top:665px" width="17" height="17" viewBox="0 0 17 17" shape-rendering="crispEdges">
<path d="M0 0H17V17H0Z" fill="#cccccc"/><path d="M0 0H17L0 17Z" fill="#ffffff"/>
<path d="M0.5 16.5L16.5 0.5" stroke="#000" shape-rendering="auto"/>
<path d="M16.5 0V17M0 16.5H17" stroke="#333333"/>
<path d="M4 1h2v1h-2zM3 2h4v1h-4zM2 3h6v1h-6zM4 4h2v4h-2z" fill="#000"/>
<path d="M11 8h2v4h-2zM9 12h6v1h-6zM10 13h4v1h-4zM11 14h2v1h-2z" fill="#000"/>
</svg>
<svg style="left:532px;top:666px" width="14" height="14" viewBox="0 0 14 14">
<rect x="0" y="0" width="14" height="14" rx="1.5" fill="#339933"/>
<rect x="7" y="7" width="7" height="7" fill="#009900" opacity="0.5"/>
<path d="M2.5 7H10M7 3.5L10.5 7L7 10.5" stroke="#ffffff" stroke-width="2" fill="none"/>
</svg>
<span class="t" style="left:569px;top:637px;line-height:16px;letter-spacing:0.3px">Изменить на</span>
<div style="left:565px;top:659px;width:61px;height:21px;background:#cccccc;"></div>
<div style="left:565px;top:659px;width:61px;height:1px;background:#808080;"></div>
<div style="left:565px;top:659px;width:1px;height:21px;background:#808080;"></div>
<div style="left:565px;top:679px;width:61px;height:1px;background:#ffffff;"></div>
<div style="left:625px;top:659px;width:1px;height:21px;background:#ffffff;"></div>
<div style="left:566px;top:660px;width:59px;height:1px;background:#333333;"></div>
<div style="left:566px;top:660px;width:1px;height:19px;background:#333333;"></div>
<div style="left:566px;top:678px;width:59px;height:1px;background:#d4d0c8;"></div>
<div style="left:624px;top:660px;width:1px;height:19px;background:#d4d0c8;"></div>
<span class="t" style="left:569px;top:660px;line-height:18px;font-size:12px;letter-spacing:-0.5px">0.00</span>
<svg style="left:607px;top:661px" width="17" height="17" viewBox="0 0 17 17" shape-rendering="crispEdges">
<path d="M0 0H17V17H0Z" fill="#cccccc"/><path d="M0 0H17L0 17Z" fill="#ffffff"/>
<path d="M0.5 16.5L16.5 0.5" stroke="#000" shape-rendering="auto"/>
<path d="M16.5 0V17M0 16.5H17" stroke="#333333"/>
<path d="M4 1h2v1h-2zM3 2h4v1h-4zM2 3h6v1h-6zM4 4h2v4h-2z" fill="#000"/>
<path d="M11 8h2v4h-2zM9 12h6v1h-6zM10 13h4v1h-4zM11 14h2v1h-2z" fill="#000"/>
</svg>
<svg style="left:636px;top:662px" width="14" height="14" viewBox="0 0 14 14">
<rect x="0" y="0" width="14" height="14" rx="1.5" fill="#339933"/>
<rect x="7" y="7" width="7" height="7" fill="#009900" opacity="0.5"/>
<path d="M2.5 7H10M7 3.5L10.5 7L7 10.5" stroke="#ffffff" stroke-width="2" fill="none"/>
</svg>
<div style="left:569px;top:692px;width:13px;height:13px;background:#ffffff;"></div>
<div style="left:569px;top:692px;width:13px;height:1px;background:#808080;"></div>
<div style="left:569px;top:692px;width:1px;height:13px;background:#808080;"></div>
<div style="left:569px;top:704px;width:13px;height:1px;background:#ffffff;"></div>
<div style="left:581px;top:692px;width:1px;height:13px;background:#ffffff;"></div>
<div style="left:570px;top:693px;width:11px;height:1px;background:#333333;"></div>
<div style="left:570px;top:693px;width:1px;height:11px;background:#333333;"></div>
<div style="left:570px;top:703px;width:11px;height:1px;background:#d4d0c8;"></div>
<div style="left:580px;top:693px;width:1px;height:11px;background:#d4d0c8;"></div>
<span class="t" style="left:588px;top:689px;line-height:16px;">процентов</span>
<svg style="left:671px;top:638px" width="85" height="71" viewBox="671 638 85 71"><path d="M671.5 638V709M678.5 638V709M685.5 638V709M692.5 638V709M699.5 638V709M706.5 638V709M713.5 638V709M720.5 638V709M727.5 638V709M734.5 638V709M741.5 638V709M748.5 638V709M755.5 638V709M671 638.5H756M671 648.5H756M671 658.5H756M671 668.5H756M671 678.5H756M671 688.5H756M671 698.5H756M671 708.5H756" stroke="#808080" shape-rendering="crispEdges"/><path d="M676 643.5L694.7 643.5L702.7 644.3Q708 646 713 648.3Q718 651 722 654.5Q726 657.5 728.9 660.8Q733 666 736.9 672.2Q740.5 678 743.8 684.8L747.8 693.9L751.8 703.6" stroke="#0000ff" stroke-width="1.1" fill="none"/><path d="M676 704.4L693.5 704.4L701.5 703.1Q707 701 712.9 698.5Q718 695.5 722 692.2Q726 689 728.9 685.9Q733 681 736.9 675.7Q740 670 742.6 664.2L747.2 654L751.8 644.3" stroke="#ff0000" stroke-width="1.1" fill="none"/></svg>
<div style="left:767px;top:637px;width:80px;height:6px;background:#ffffff;"></div>
<div style="left:767px;top:637px;width:80px;height:1px;background:#808080;"></div>
<div style="left:767px;top:637px;width:1px;height:6px;background:#808080;"></div>
<div style="left:768px;top:638px;width:78px;height:1px;background:#333333;"></div>
<div style="left:768px;top:642px;width:79px;height:1px;background:#ffffff;"></div>
<svg style="left:767px;top:636px" width="6" height="10" viewBox="0 0 6 10" shape-rendering="crispEdges">
<path d="M0 0H5V7L3 9H2L0 7Z" fill="#cccccc"/>
<path d="M0.5 8V0.5H4.5" stroke="#ffffff" fill="none"/>
<path d="M5.5 0V7.5L3 10" stroke="#333333" fill="none"/>
</svg>
<svg style="left:760px;top:637px" width="100" height="16" viewBox="760 637 100 16" shape-rendering="crispEdges"><path d="M768.5 647V651M772.5 647V650M776.5 647V650M780.5 647V650M784.5 647V650M788.5 647V650M792.5 647V650M796.5 647V650M800.5 647V650M804.5 647V650M808.5 647V650M812.5 647V650M816.5 647V650M820.5 647V650M824.5 647V650M828.5 647V650M832.5 647V650M836.5 647V650M840.5 647V650M844.5 647V651" stroke="#000"/></svg>
<div style="left:767px;top:657px;width:80px;height:6px;background:#ffffff;"></div>
<div style="left:767px;top:657px;width:80px;height:1px;background:#808080;"></div>
<div style="left:767px;top:657px;width:1px;height:6px;background:#808080;"></div>
<div style="left:768px;top:658px;width:78px;height:1px;background:#333333;"></div>
<div style="left:768px;top:662px;width:79px;height:1px;background:#ffffff;"></div>
<svg style="left:801px;top:656px" width="6" height="10" viewBox="0 0 6 10" shape-rendering="crispEdges">
<path d="M0 0H5V7L3 9H2L0 7Z" fill="#cccccc"/>
<path d="M0.5 8V0.5H4.5" stroke="#ffffff" fill="none"/>
<path d="M5.5 0V7.5L3 10" stroke="#333333" fill="none"/>
</svg>
<svg style="left:760px;top:657px" width="100" height="16" viewBox="760 657 100 16" shape-rendering="crispEdges"><path d="M768.5 667V671M772.5 667V670M776.5 667V670M780.5 667V670M784.5 667V670M788.5 667V670M792.5 667V670M796.5 667V670M800.5 667V670M804.5 667V670M808.5 667V670M812.5 667V670M816.5 667V670M820.5 667V670M824.5 667V670M828.5 667V670M832.5 667V670M836.5 667V670M840.5 667V670M844.5 667V671" stroke="#000"/></svg>
<svg style="left:777px;top:680px" width="20" height="19" viewBox="0 0 20 19">
<rect x="0.5" y="0.5" width="19" height="18" rx="1" fill="#e8ffff" stroke="#0066cc"/>
<path d="M1 1H19V3H1Z" fill="#0066cc"/>
<path d="M19 8L19 18H9Z" fill="#ccccff"/>
<path d="M3.5 15.5L15.5 4.5" stroke="#333333" stroke-dasharray="1 1"/>
<rect x="2" y="13" width="3" height="3" fill="#ff6600"/><rect x="8" y="8" width="3" height="3" fill="#ff6600"/><rect x="13" y="3" width="3" height="3" fill="#ff6600"/>
</svg>
<span class="t" style="left:807px;top:675px;line-height:16px;">Интер-</span>
<span class="t" style="left:804px;top:688px;line-height:16px;">поляция</span>
<div style="left:873px;top:644px;width:13px;height:13px;background:#cccccc;"></div>
<div style="left:873px;top:644px;width:13px;height:1px;background:#808080;"></div>
<div style="left:873px;top:644px;width:1px;height:13px;background:#808080;"></div>
<div style="left:873px;top:656px;width:13px;height:1px;background:#ffffff;"></div>
<div style="left:885px;top:644px;width:1px;height:13px;background:#ffffff;"></div>
<div style="left:874px;top:645px;width:11px;height:1px;background:#333333;"></div>
<div style="left:874px;top:645px;width:1px;height:11px;background:#333333;"></div>
<div style="left:874px;top:655px;width:11px;height:1px;background:#d4d0c8;"></div>
<div style="left:884px;top:645px;width:1px;height:11px;background:#d4d0c8;"></div>
<svg style="left:873px;top:644px" width="13" height="13"><path d="M3 6L5.5 8.5L10 3.5" stroke="#808080" stroke-width="1.8" fill="none"/></svg>
<div style="left:891px;top:0;width:17px;height:745px;overflow:hidden">
<span class="t" style="left:1px;top:643px;line-height:16px;color:#ffffff">отс</span>
<span class="t" style="left:0px;top:642px;line-height:16px;color:#808080">отс</span>
</div>
<div style="left:4px;top:724px;width:90px;height:1px;background:#808080;"></div>
<div style="left:4px;top:724px;width:1px;height:15px;background:#808080;"></div>
<div style="left:93px;top:724px;width:1px;height:15px;background:#ffffff;"></div>
<div style="left:96px;top:724px;width:78px;height:1px;background:#808080;"></div>
<div style="left:96px;top:724px;width:1px;height:15px;background:#808080;"></div>
<div style="left:173px;top:724px;width:1px;height:15px;background:#ffffff;"></div>
<div style="left:176px;top:724px;width:735px;height:1px;background:#808080;"></div>
<div style="left:176px;top:724px;width:1px;height:15px;background:#808080;"></div>
<div style="left:910px;top:724px;width:1px;height:15px;background:#ffffff;"></div>
<span class="t" style="left:5px;top:725px;line-height:16px;">GM-ISFI-2S</span>
<span class="t" style="left:97px;top:725px;line-height:16px;">неизв. ПО</span>
<svg style="left:898px;top:725px" width="13" height="13"><path d="M12 1L1 12M12 5L5 12M12 9L9 12" stroke="#ffffff" stroke-width="1"/><path d="M12 2L2 12M12 3L3 12M12 6L6 12M12 7L7 12M12 10L10 12M12 11L11 12" stroke="#808080" stroke-width="1"/></svg>
<div style="left:0px;top:739px;width:915px;height:1px;background:#ffffff;"></div>
<div style="left:2px;top:742px;width:51px;height:1px;background:#ffffff;"></div>
<div style="left:2px;top:742px;width:1px;height:3px;background:#ffffff;"></div>
<div style="left:52px;top:742px;width:1px;height:3px;background:#333333;"></div>
<div style="left:55px;top:742px;width:118px;height:1px;background:#ffffff;"></div>
<div style="left:55px;top:742px;width:1px;height:3px;background:#ffffff;"></div>
<div style="left:172px;top:742px;width:1px;height:3px;background:#333333;"></div>
<div style="left:175px;top:742px;width:103px;height:1px;background:#ffffff;"></div>
<div style="left:175px;top:742px;width:1px;height:3px;background:#ffffff;"></div>
<div style="left:277px;top:742px;width:1px;height:3px;background:#333333;"></div>
<div style="left:282px;top:742px;width:106px;height:1px;background:#ffffff;"></div>
<div style="left:282px;top:742px;width:1px;height:3px;background:#ffffff;"></div>
<div style="left:387px;top:742px;width:1px;height:3px;background:#333333;"></div>
<div style="left:392px;top:742px;width:106px;height:1px;background:#ffffff;"></div>
<div style="left:392px;top:742px;width:1px;height:3px;background:#ffffff;"></div>
<div style="left:497px;top:742px;width:1px;height:3px;background:#333333;"></div>
<div style="left:502px;top:742px;width:106px;height:1px;background:#ffffff;"></div>
<div style="left:502px;top:742px;width:1px;height:3px;background:#ffffff;"></div>
<div style="left:607px;top:742px;width:1px;height:3px;background:#333333;"></div>
<div style="left:722px;top:742px;width:106px;height:1px;background:#ffffff;"></div>
<div style="left:722px;top:742px;width:1px;height:3px;background:#ffffff;"></div>
<div style="left:827px;top:742px;width:1px;height:3px;background:#333333;"></div>
<div style="left:869px;top:742px;width:46px;height:1px;background:#ffffff;"></div>
<div style="left:869px;top:742px;width:1px;height:3px;background:#ffffff;"></div>
<div style="left:914px;top:742px;width:1px;height:3px;background:#333333;"></div>
<div style="left:611px;top:742px;width:108px;height:1px;background:#333333;"></div>
<div style="left:611px;top:742px;width:1px;height:3px;background:#333333;"></div>
<div style="left:612px;top:743px;width:106px;height:1px;background:#808080;"></div>
<div style="left:612px;top:743px;width:1px;height:2px;background:#808080;"></div>
<div style="left:613px;top:744px;width:105px;height:1px;background:repeating-linear-gradient(to right,#ffffff 0 1px,#cccccc 1px 2px);"></div>
<div style="left:838px;top:743px;width:1px;height:2px;background:#333333;"></div>
</body></html>
